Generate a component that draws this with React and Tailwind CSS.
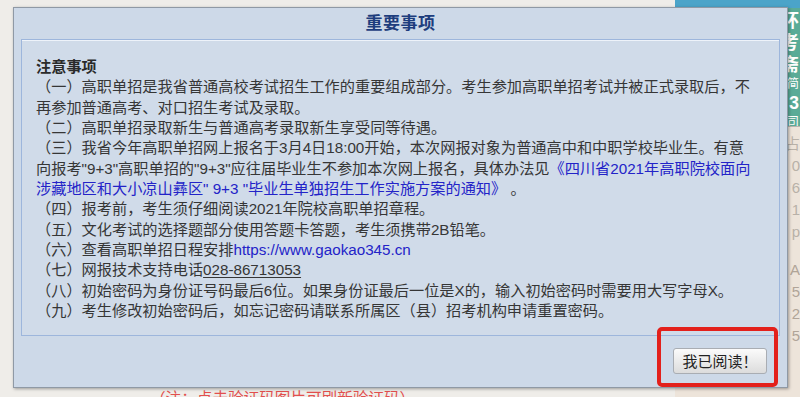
export default function App() {
  const font = "font-['Liberation_Sans','Noto_Sans_CJK_SC',sans-serif]";

  return (
    <div className={`relative w-[800px] h-[397px] overflow-hidden bg-[#efede9] ${font}`}>
      {/* page behind the dialog */}
      <div className="flex h-full">
        <div className="flex-1 flex flex-col">
          <div className="h-[389px] shrink-0" />
          <div className="shrink-0 pl-[150px] text-[15.6px] leading-[20px] text-[#e2504e] whitespace-nowrap">
            （注：点击验证码图片可刷新验证码）
          </div>
        </div>
        <div className="w-[125px] flex flex-col">
          <div className="h-[8px] bg-[#4ba4c9]" />
          <div className="h-[118px] bg-[#5aab97] flex flex-col items-end pr-[1px] pt-[2px] text-white font-bold text-[18px] leading-[22px]">
            <span>环</span>
            <span>考</span>
            <span>斋</span>
            <span className="text-[12px] leading-[16px] font-normal">简</span>
            <span>3</span>
            <span className="text-[12px] leading-[16px] font-normal">司</span>
          </div>
          <div className="flex-1 bg-[#ede4da] border-t border-[#b9b4ae] flex flex-col items-end pt-[6px] text-[#b8b1a8] text-[15px] leading-[22px]">
            <span>占</span>
            <span>0</span>
            <span>6</span>
            <span>1</span>
            <span>p</span>
            <span className="mt-[16px] text-[#b0a498]">A</span>
            <span className="text-[#b0a498]">5</span>
            <span className="text-[#b0a498]">2</span>
            <span className="text-[#b0a498]">5</span>
          </div>
        </div>
      </div>

      {/* modal dialog */}
      <div className="absolute left-[13px] top-[7px] w-[775px] h-[381px] bg-[#cdd9e8] border border-[#8f99a5] shadow-[1px_1px_3px_rgba(0,0,0,0.35)] flex flex-col">
        <div className="h-[31px] flex items-center justify-center">
          <h2 className="text-[17px] font-bold text-[#1d3d7d] tracking-[0.5px]">重要事项</h2>
        </div>
        <div className="mx-[7px] h-[297px] bg-[#d0dbe9] border border-[#9db6dc] shadow-[inset_0_1px_0_#eef3fa] pl-[14px] pt-[17px] text-[15.2px] leading-[20.33px] text-[#363636] whitespace-nowrap">
          <div className="font-bold text-[#2a2a2a]">注意事项</div>
          <div>（一）高职单招是我省普通高校考试招生工作的重要组成部分。考生参加高职单招考试并被正式录取后，不</div>
          <div>再参加普通高考、对口招生考试及录取。</div>
          <div>（二）高职单招录取新生与普通高考录取新生享受同等待遇。</div>
          <div>（三）我省今年高职单招网上报名于3月4日18:00开始，本次网报对象为普通高中和中职学校毕业生。有意</div>
          <div>
            向报考"9+3"高职单招的"9+3"应往届毕业生不参加本次网上报名，具体办法见
            <span className="text-[#2323c8]">《四川省2021年高职院校面向</span>
          </div>
          <div>
            <span className="text-[#2323c8]">涉藏地区和大小凉山彝区" 9+3 "毕业生单独招生工作实施方案的通知》</span> 。
          </div>
          <div>（四）报考前，考生须仔细阅读2021年院校高职单招章程。</div>
          <div>（五）文化考试的选择题部分使用答题卡答题，考生须携带2B铅笔。</div>
          <div>
            （六）查看高职单招日程安排<span className="text-[#2323c8]">https://www.gaokao345.cn</span>
          </div>
          <div>
            （七）网报技术支持电话<span className="underline underline-offset-2">028-86713053</span>
          </div>
          <div>（八）初始密码为身份证号码最后6位。如果身份证最后一位是X的，输入初始密码时需要用大写字母X。</div>
          <div>（九）考生修改初始密码后，如忘记密码请联系所属区（县）招考机构申请重置密码。</div>
        </div>
        <div className="flex justify-end pt-[12px] pr-[20px]">
          <button className="w-[94px] h-[26px] rounded-[3px] border border-[#a9adb3] bg-gradient-to-b from-[#fbfbfb] to-[#dcdcdc] text-[15px] text-[#222] leading-none">
            我已阅读！
          </button>
        </div>
      </div>

      {/* red highlight annotation */}
      <div className="absolute left-[657px] top-[327px] w-[121px] h-[60px] border-[4px] border-[#e3201b] rounded-[5px]" />
    </div>
  );
}
